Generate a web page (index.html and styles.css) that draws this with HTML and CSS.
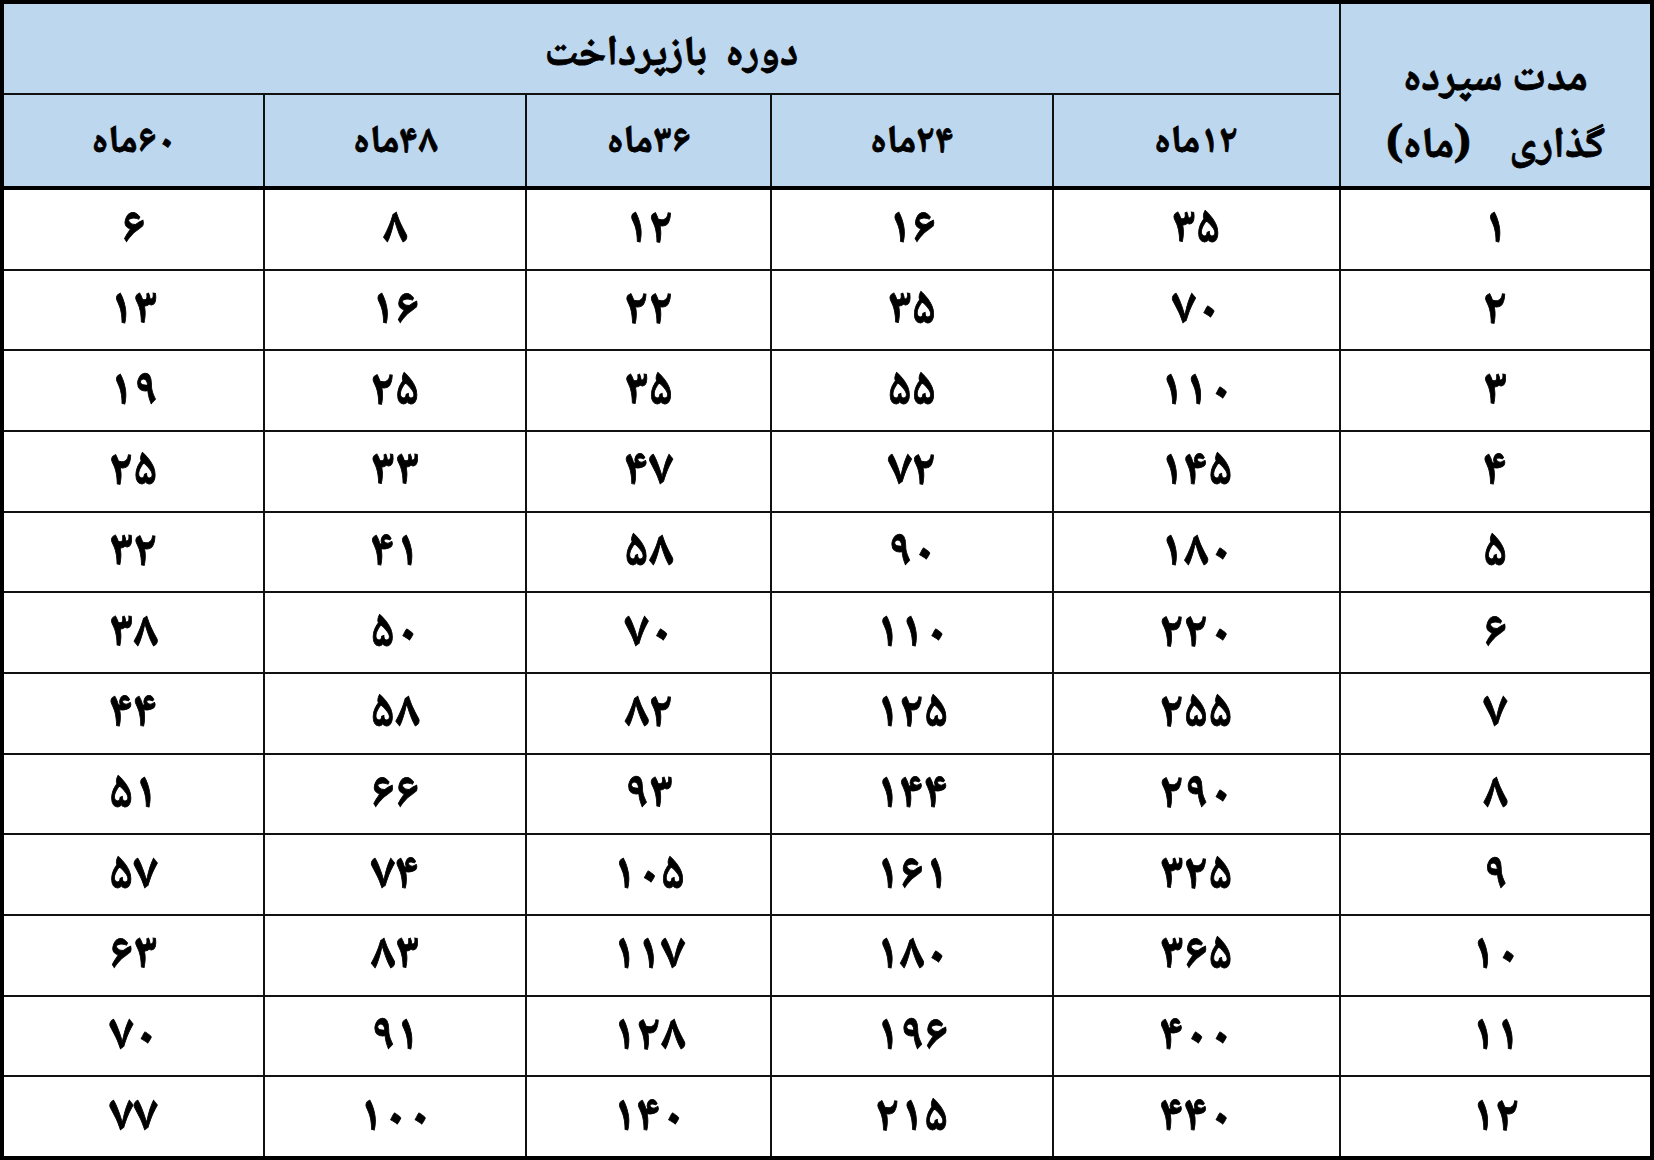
FILE: index.html
```html
<!DOCTYPE html>
<html lang="fa" dir="rtl">
<head>
<meta charset="utf-8">
<title>جدول بازپرداخت</title>
<link rel="stylesheet" href="styles.css">
</head>
<body>
<table class="grid">
  <colgroup>
    <col class="c-term">
    <col class="c-12">
    <col class="c-24">
    <col class="c-36">
    <col class="c-48">
    <col class="c-60">
  </colgroup>
  <thead>
    <tr class="head-top">
      <th class="term" rowspan="2"><span class="term-line">مدت سپرده</span><span class="term-line term-unit">گذاری&nbsp;&nbsp;&nbsp; (ماه)</span></th>
      <th class="period" colspan="5">دوره&nbsp; بازپرداخت</th>
    </tr>
    <tr class="head-sub">
      <th>۱۲ماه</th>
      <th>۲۴ماه</th>
      <th>۳۶ماه</th>
      <th>۴۸ماه</th>
      <th>۶۰ماه</th>
    </tr>
  </thead>
  <tbody>
    <tr><td>۱</td><td>۳۵</td><td>۱۶</td><td>۱۲</td><td>۸</td><td>۶</td></tr>
    <tr><td>۲</td><td>۷۰</td><td>۳۵</td><td>۲۲</td><td>۱۶</td><td>۱۳</td></tr>
    <tr><td>۳</td><td>۱۱۰</td><td>۵۵</td><td>۳۵</td><td>۲۵</td><td>۱۹</td></tr>
    <tr><td>۴</td><td>۱۴۵</td><td>۷۲</td><td>۴۷</td><td>۳۳</td><td>۲۵</td></tr>
    <tr><td>۵</td><td>۱۸۰</td><td>۹۰</td><td>۵۸</td><td>۴۱</td><td>۳۲</td></tr>
    <tr><td>۶</td><td>۲۲۰</td><td>۱۱۰</td><td>۷۰</td><td>۵۰</td><td>۳۸</td></tr>
    <tr><td>۷</td><td>۲۵۵</td><td>۱۲۵</td><td>۸۲</td><td>۵۸</td><td>۴۴</td></tr>
    <tr><td>۸</td><td>۲۹۰</td><td>۱۴۴</td><td>۹۳</td><td>۶۶</td><td>۵۱</td></tr>
    <tr><td>۹</td><td>۳۲۵</td><td>۱۶۱</td><td>۱۰۵</td><td>۷۴</td><td>۵۷</td></tr>
    <tr><td>۱۰</td><td>۳۶۵</td><td>۱۸۰</td><td>۱۱۷</td><td>۸۳</td><td>۶۳</td></tr>
    <tr><td>۱۱</td><td>۴۰۰</td><td>۱۹۶</td><td>۱۲۸</td><td>۹۱</td><td>۷۰</td></tr>
    <tr><td>۱۲</td><td>۴۴۰</td><td>۲۱۵</td><td>۱۴۰</td><td>۱۰۰</td><td>۷۷</td></tr>
  </tbody>
</table>
</body>
</html>
```
FILE: styles.css
```css
html, body {
  margin: 0;
  padding: 0;
  background: #ffffff;
}

body {
  font-family: "Noto Naskh Arabic", "Noto Sans Arabic", "DejaVu Sans", sans-serif;
  color: #000000;
}

.grid {
  width: 1654px;
  height: 1160px;
  border-collapse: collapse;
  table-layout: fixed;
  border: 4px solid #000000;
}

.c-term { width: 312px; }
.c-12 { width: 287px; }
.c-24 { width: 281px; }
.c-36 { width: 245px; }
.c-48 { width: 262px; }
.c-60 { width: 262px; }

.grid th,
.grid td {
  border: 2px solid #111111;
  text-align: center;
  vertical-align: middle;
  padding: 0;
  font-weight: bold;
  line-height: 1;
  -webkit-text-stroke: 0.8px #000000;
}

.grid th {
  background: #bdd7ee;
  font-size: 41px;
}

.head-top th {
  height: 75px;
}

.head-top .period {
  padding-top: 14px;
  font-size: 42px;
}

.head-sub th {
  height: 85px;
  padding-top: 6px;
  border-bottom: 4px solid #000000;
  font-size: 39px;
}

.grid th.term {
  border-bottom: 4px solid #000000;
  vertical-align: top;
  padding-top: 42px;
  font-size: 43px;
}

.term-line {
  display: block;
  line-height: 70px;
  white-space: nowrap;
}

.term-unit {
  line-height: 64px;
}

.grid td {
  height: 72px;
  padding-top: 6px;
  font-size: 50px;
  background: #ffffff;
}
```
